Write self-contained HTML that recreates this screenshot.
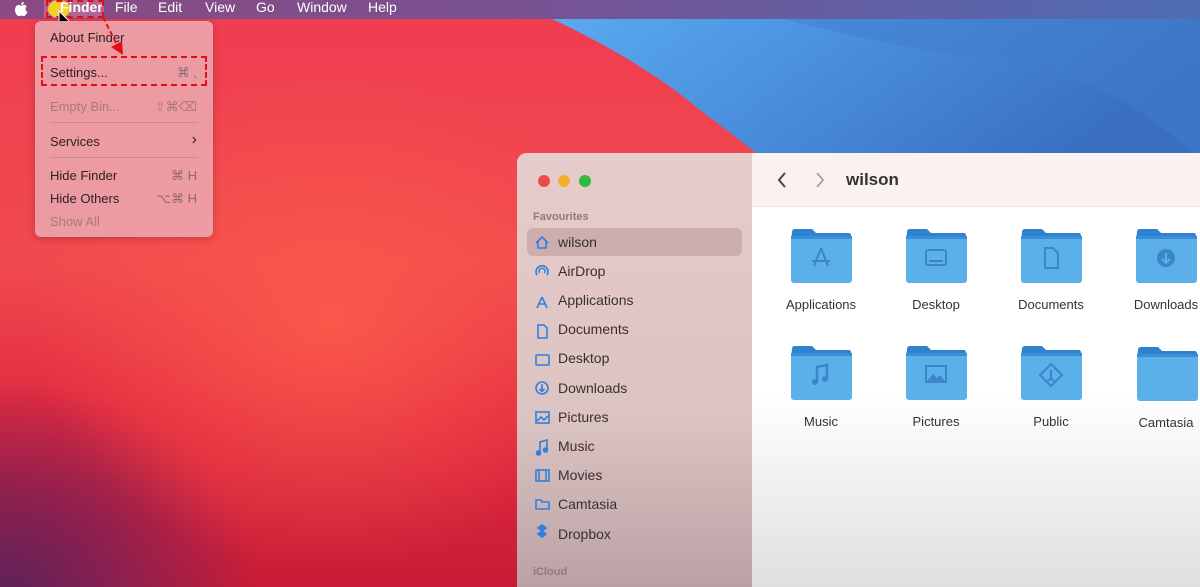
<!DOCTYPE html>
<html style="width:1200px;height:587px;overflow:hidden"><head><style>
*{margin:0;padding:0;box-sizing:border-box}
body{width:1200px;height:587px;overflow:hidden;position:relative;font-family:"Liberation Sans",sans-serif;
background:
radial-gradient(ellipse 300px 250px at 330px 320px,rgba(252,90,75,.9) 0%,rgba(252,90,75,0) 100%),
radial-gradient(ellipse 260px 220px at 0px 600px,#5a2258 0%,#8a2050 45%,rgba(200,30,70,0) 100%),
linear-gradient(180deg,#f03c50 0%,#f04a4e 45%,#e22a40 70%,#c81c36 100%);background-repeat:no-repeat}
.bar{position:absolute;left:0;top:0;width:1200px;height:19px;background:linear-gradient(90deg,#8a4a82,#7a5090 40%,#4e6cb4 100%);color:#fff;font-size:14px}
.bar span{position:absolute;top:-1px}
.menu{position:absolute;left:35px;top:21px;width:178px;height:216px;background:rgba(236,160,168,.95);border-radius:6px;box-shadow:0 2px 8px rgba(0,0,0,.2);font-size:13px;color:#2e2225}
.menu div{position:absolute;left:15px}
.menu .k{left:auto;right:16px;color:#8e6a70}
.menu .sep{left:15px;right:15px;height:1px;background:rgba(150,100,110,.35)}
.dash{position:absolute;border:2px dashed #e0101a}
.win{position:absolute;left:517px;top:153px;width:700px;height:440px;border-radius:10px 0 0 0;overflow:hidden;background:linear-gradient(180deg,#fff 0%,#fff 55%,#dedede 100%)}
.side{position:absolute;left:0;top:0;width:235px;height:100%;background:linear-gradient(180deg,#e6cccc 0%,#dcc4c2 60%,#b9a0a4 100%)}
.tool{position:absolute;left:235px;top:0;right:0;height:54px;background:#fbf1f0;border-bottom:1px solid #ece0e0}
.si{position:absolute;left:41px;font-size:14px;color:#3a2f30}
.f{position:absolute;width:62px;height:56px}
.lbl{position:absolute;width:110px;text-align:center;font-size:13px;color:#333}
</style></head><body>
<svg style="position:absolute;left:0;top:0" width="1200" height="587">
<defs><linearGradient id="bl" x1="0" y1="0" x2="1" y2="0.3"><stop offset="0" stop-color="#5aaaf0"/><stop offset="0.45" stop-color="#4a90de"/><stop offset="1" stop-color="#3a6fc0"/></linearGradient></defs>
<path d="M550 18 Q640 60 700 110 Q740 140 765 160 L1200 160 L1200 18 Z" fill="url(#bl)"/>
<path d="M780 18 Q900 50 1000 60 Q1120 80 1200 160 L1200 18 Z" fill="#3f7dcc" opacity=".5"/>
</svg>
<div class="bar">
<svg style="position:absolute;left:13px;top:1px" width="16" height="17"><path d="M8 5 C6 3 2 4 2 9 C2 13 5 16 7 15 C8 14.5 9 14.5 10 15 C12 16 14 12 14.5 11 C12 10 12 6 14 5.5 C12 3 10 4 8 5 Z M8 4 C8 2 10 1 11 1 C11 3 9 4 8 4 Z" fill="#fff"/></svg>
<div style="position:absolute;left:44px;top:-2px;width:60px;height:20px;background:rgba(220,130,160,.5)"></div>
<div style="position:absolute;left:48px;top:0;width:22px;height:18px;border-radius:50%;background:#f2d12a"></div>
<span style="left:60px;font-weight:bold">Finder</span>
<span style="left:115px">File</span><span style="left:158px">Edit</span><span style="left:205px">View</span><span style="left:256px">Go</span><span style="left:297px">Window</span><span style="left:368px">Help</span>
</div>
<div class="dash" style="left:46px;top:0;width:58px;height:18px"></div>
<svg style="position:absolute;left:58px;top:10px" width="14" height="22"><path d="M1 1 L1 17 L5 13 L8 20 L10 19 L7 12 L12 12 Z" fill="#000" stroke="#fff" stroke-width="1"/></svg>
<div class="menu">
<div style="top:9px">About Finder</div>
<div style="top:44px">Settings...</div><div class="k" style="top:44px">⌘ ,</div>
<div style="top:78px;color:#a8787e">Empty Bin...</div><div class="k" style="top:78px;color:#a8787e">⇧⌘⌫</div>
<div class="sep" style="top:101px"></div>
<div style="top:113px">Services</div><div class="k" style="top:110px;color:#2e2225;font-size:16px">›</div>
<div class="sep" style="top:136px"></div>
<div style="top:147px">Hide Finder</div><div class="k" style="top:147px">⌘ H</div>
<div style="top:170px">Hide Others</div><div class="k" style="top:170px">⌥⌘ H</div>
<div style="top:193px;color:#a8787e">Show All</div>
</div>
<div class="dash" style="left:41px;top:56px;width:166px;height:30px"></div>
<svg style="position:absolute;left:95px;top:15px" width="40" height="45"><path d="M8 2 L22 30" stroke="#e0101a" stroke-width="2" stroke-dasharray="5 3" fill="none"/><path d="M16 32 L28 40 L27 26 Z" fill="#e0101a"/></svg>

<div class="win">
<div class="side">
<div style="position:absolute;left:21px;top:22px;width:12px;height:12px;border-radius:50%;background:#ec4a44"></div>
<div style="position:absolute;left:41px;top:22px;width:12px;height:12px;border-radius:50%;background:#f4b02a"></div>
<div style="position:absolute;left:62px;top:22px;width:12px;height:12px;border-radius:50%;background:#33b93e"></div>
<div style="position:absolute;left:16px;top:58px;font-size:11px;color:#8f7b7c;font-weight:bold">Favourites</div>
<div style="position:absolute;left:10px;top:75px;width:215px;height:28px;border-radius:6px;background:#cdaeae"></div>
<div class="si" style="top:81px">wilson</div>
<div class="si" style="top:110px">AirDrop</div>
<div class="si" style="top:139px">Applications</div>
<div class="si" style="top:168px">Documents</div>
<div class="si" style="top:197px">Desktop</div>
<div class="si" style="top:227px">Downloads</div>
<div class="si" style="top:256px">Pictures</div>
<div class="si" style="top:285px">Music</div>
<div class="si" style="top:314px">Movies</div>
<div class="si" style="top:343px">Camtasia</div>
<div class="si" style="top:373px">Dropbox</div>
<div style="position:absolute;left:16px;top:413px;font-size:11px;color:#8f7b7c;font-weight:bold">iCloud</div>
<svg style="position:absolute;left:17px;top:80px" width="18" height="310" fill="none" stroke="#2f7fe0" stroke-width="1.6">
<path d="M2 10 L8 4 L14 10 M4 8 V15 H12 V8"/>
<path d="M3 42 A6 6 0 1 1 13 42 M5.5 40 A3 3 0 1 1 10.5 40"/>
<path d="M8 64 L3 75 M8 64 L13 75 M4 71 H12"/>
<path d="M4 92 H10 L13 95 V105 H4 Z"/>
<rect x="2" y="122" width="13" height="10" rx="1"/>
<circle cx="8" cy="155" r="6"/><path d="M8 151 V158 M5.5 156 L8 158.5 L10.5 156"/>
<rect x="2" y="179" width="13" height="11"/><path d="M3 188 L7 184 L10 187 L14 183" />
<path d="M6 220 V209 L13 207 V217"/><circle cx="4.5" cy="220" r="2" fill="#2f7fe0"/><circle cx="11.5" cy="217" r="2" fill="#2f7fe0"/>
<rect x="2" y="237" width="13" height="11"/><path d="M5 237 V248 M12 237 V248"/>
<path d="M2 267 H7 L8 269 H15 V276 H2 Z"/>
<path d="M8 298 L4 295 L8 292 L12 295 Z M8 298 L4 301 L8 304 L12 301 Z" fill="#2f7fe0"/>
</svg>
</div>
<div class="tool">
<svg style="position:absolute;left:24px;top:18px" width="12" height="18"><path d="M9 2 L3 9 L9 16" stroke="#444" stroke-width="2" fill="none"/></svg>
<svg style="position:absolute;left:62px;top:18px" width="12" height="18"><path d="M3 2 L9 9 L3 16" stroke="#999" stroke-width="1.6" fill="none"/></svg>
<div style="position:absolute;left:94px;top:17px;font-size:17px;font-weight:bold;color:#333">wilson</div>
</div>
</div>

<svg width="0" height="0" style="position:absolute"><defs>
<symbol id="fd" viewBox="0 0 62 56"><path d="M2 4 Q2 1 5 1 H22 L26 5 H59 Q61 5 61 8 V14 H1 Z" fill="#2f82cf"/><rect x="1" y="8" width="61" height="47" rx="3" fill="#5cb0ea"/><rect x="1" y="8" width="61" height="3" fill="#3a8ed8"/></symbol>
</defs></svg>
<svg class="f" style="left:790px;top:228px"><use href="#fd"/><path d="M31 20 L24 38 M31 20 L38 38 M22 33 H40" stroke="#3a86c8" stroke-width="2" fill="none"/></svg>
<svg class="f" style="left:905px;top:228px"><use href="#fd"/><rect x="21" y="22" width="20" height="15" rx="2" stroke="#3a86c8" stroke-width="2" fill="none"/><path d="M24 33 H38" stroke="#3a86c8" stroke-width="2"/></svg>
<svg class="f" style="left:1020px;top:228px"><use href="#fd"/><path d="M25 20 H33 L38 25 V40 H25 Z" stroke="#3a86c8" stroke-width="2" fill="none"/></svg>
<svg class="f" style="left:1135px;top:228px"><use href="#fd"/><circle cx="31" cy="30" r="9" fill="#3a86c8"/><path d="M31 25 V34 M27 31 L31 35 L35 31" stroke="#5cb0ea" stroke-width="2" fill="none"/></svg>
<svg class="f" style="left:790px;top:345px"><use href="#fd"/><path d="M27 37 V22 L37 20 V34" stroke="#3a86c8" stroke-width="2.5" fill="none"/><circle cx="25" cy="37" r="3" fill="#3a86c8"/><circle cx="35" cy="34" r="3" fill="#3a86c8"/></svg>
<svg class="f" style="left:905px;top:345px"><use href="#fd"/><rect x="21" y="21" width="20" height="16" stroke="#3a86c8" stroke-width="2" fill="none"/><path d="M22 36 L28 29 L32 33 L35 30 L40 36 Z" fill="#3a86c8"/></svg>
<svg class="f" style="left:1020px;top:345px"><use href="#fd"/><path d="M31 19 L42 30 L31 41 L20 30 Z" stroke="#3a86c8" stroke-width="2" fill="none"/><path d="M31 25 V33 M28 36 L31 33 L34 36" stroke="#3a86c8" stroke-width="2" fill="none"/></svg>
<svg class="f" style="left:1136px;top:346px"><use href="#fd"/></svg>
<div class="lbl" style="left:766px;top:297px">Applications</div>
<div class="lbl" style="left:881px;top:297px">Desktop</div>
<div class="lbl" style="left:996px;top:297px">Documents</div>
<div class="lbl" style="left:1111px;top:297px">Downloads</div>
<div class="lbl" style="left:766px;top:414px">Music</div>
<div class="lbl" style="left:881px;top:414px">Pictures</div>
<div class="lbl" style="left:996px;top:414px">Public</div>
<div class="lbl" style="left:1111px;top:415px">Camtasia</div>
</body></html>
